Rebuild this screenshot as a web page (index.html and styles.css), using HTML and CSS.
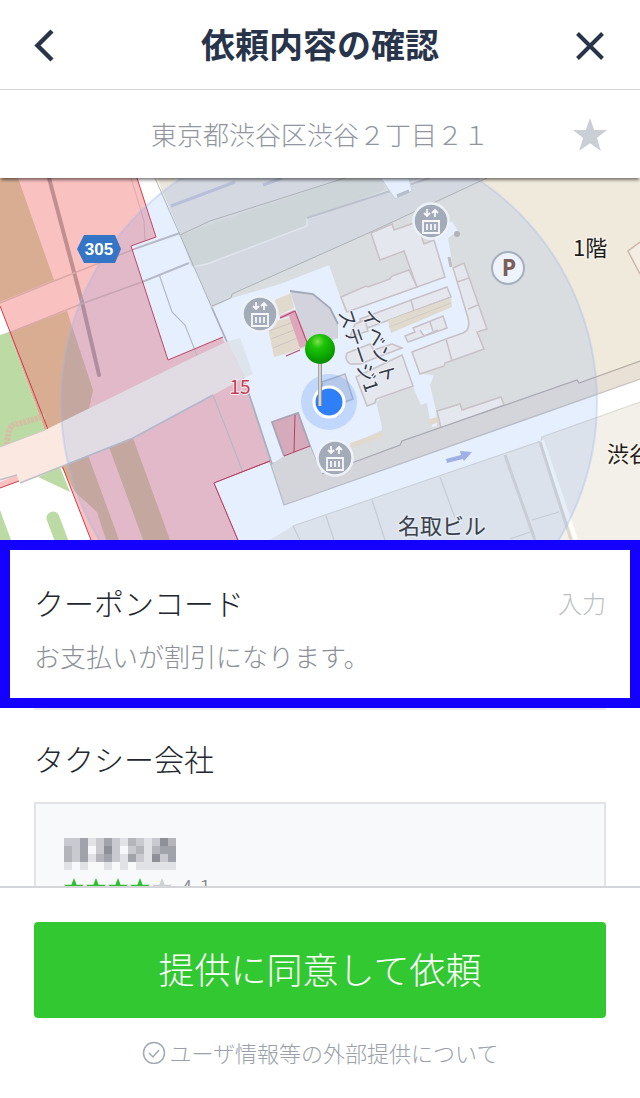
FILE: index.html
```html
<!DOCTYPE html>
<html lang="ja">
<head>
  <meta charset="UTF-8" />
  <meta name="viewport" content="width=device-width, initial-scale=1.0" />
  <title>依頼内容の確認</title>
  <link rel="stylesheet" href="styles.css">
</head>
<body>
  <header class="topbar">
    <button class="icon-button" type="button" aria-label="戻る">
      <svg width="40" height="40" viewBox="0 0 40 40"><path d="M22 7 L7.500 21.500 L22 36" fill="none" stroke="#28344a" stroke-width="4.400" /></svg>
    </button>
    <h1>依頼内容の確認</h1>
    <button class="icon-button" type="button" aria-label="閉じる">
      <svg width="40" height="40" viewBox="0 0 40 40"><path d="M7.500 9.500 L32.500 34.500 M32.500 9.500 L7.500 34.500" fill="none" stroke="#28344a" stroke-width="4" /></svg>
    </button>
  </header>

  <div class="address">
    <p>東京都渋谷区渋谷２丁目２１</p>
    <button class="icon-button" type="button" aria-label="お気に入り">
      <svg width="40" height="40" viewBox="0 0 40 40"><path d="M20 4 L24.200 16 H37 L26.900 24 L30.900 37 L20 29.300 L9.100 37 L13.100 24 L3 16 H15.800Z" fill="#caced5" /></svg>
    </button>
  </div>

  <main>
    <svg class="map" viewBox="0 178 640 362" role="img" aria-label="乗車地点の地図">
      <defs>
        <radialGradient id="pin" cx="42%" cy="25%" r="75%">
          <stop offset="0" stop-color="#7ee052" />
          <stop offset="0.300" stop-color="#1fc408" />
          <stop offset="0.600" stop-color="#0fb000" />
          <stop offset="1" stop-color="#078b00" />
        </radialGradient>
        <linearGradient id="needle">
          <stop offset="0" stop-color="#8b8b8b" />
          <stop offset="0.500" stop-color="#eeeeee" />
          <stop offset="1" stop-color="#777777" />
        </linearGradient>
        <g id="lift">
          <circle r="17.500" fill="#a4abb8" stroke="#edf1f8" stroke-width="2.500" />
          <g fill="none" stroke="#f6f8fb" stroke-width="1.800">
            <path d="M-8 0 H8 V12 H-8Z M-4 3 V9 M0 3 V9 M4 3 V9" />
            <path d="M-4 -12 V-5 M-7 -8 L-4 -5 L-1 -8 M4 -4 V-11 M1 -8 L4 -11 L7 -8" />
          </g>
        </g>
      </defs>

      <!-- land -->
      <rect y="178" width="640" height="362" fill="#f0eadc" />
      <path d="M0 178 H157 L211 306 L246 385 L280 540 H0Z" fill="#fff" />

      <!-- station side -->
      <path d="M0 178 H137 L156 237 L131 246 L168 360 L222 337 L246 385 L270 461 L214 483 L238 540 H91 L0 306Z" fill="#fac1c1" />
      <path d="M0 178 H18 L54 280 L0 302Z M9 332 L67 311 L93 390 L88 414 L45 431Z M60 464 L88 455 L119 540 H106 L97 512 L75 492Z M109 447 L133 438 L170 540 H143Z" fill="#d8ad92" />
      <path d="M0 335 L9 332 L45 431 L0 448Z M38 477 L60 467 L70 492Z M0 510 L11 540 H0Z" fill="#bcdaa3" />
      <path d="M53 518 L62 542" stroke="#bcdaa3" stroke-width="13" stroke-linecap="round" />
      <path d="M7 445 Q8 422 18 424 L45 416" fill="none" stroke="#d3c0a3" stroke-width="6" stroke-dasharray="3 1" />
      <path d="M0 482 L17 475 L19 481 L0 488Z" fill="#fac1c1" />
      <path d="M49 178 L82 302 L99 375" fill="none" stroke="#c28f91" stroke-width="4" stroke-linecap="round" />
      <path d="M0 303 L54 281 L137 248" fill="none" stroke="#dba9a9" stroke-width="1.500" />
      <path d="M9 333 L81 304 L142 282" fill="none" stroke="#dba9a9" stroke-width="1.500" />
      <path d="M131 178 L144 221 L145 240" fill="none" stroke="#dba9a9" stroke-width="1" />
      <path d="M137 248 L180 233 M142 282 L189 263" fill="none" stroke="#c8c3c0" stroke-width="2" />
      <path d="M159 274 L172 312 L185 325 L198 358 M213 395 L253 498 Q260 513 283 505" fill="none" stroke="#c6c1bd" stroke-width="1.200" />
      <path d="M137 178 L156 237 L131 246 L168 360 L223 337 M0 306 L91 540 M270 461 L214 483 L238 540 M0 488 L19 481" fill="none" stroke="#cf3b4b" stroke-width="1" />

      <!-- railway roof -->
      <path d="M157 178 H487 L373 231 L232 294 L231 298 L211 306Z" fill="#ebe5dc" />
      <path d="M180 235 L345 178 H383 L384 190 L307 219 V226 L207 264 L192 267Z" fill="#e4e1d3" />
      <path d="M192 267 L207 264 L307 226 V219 L424 178" fill="none" stroke="#f7f4ee" stroke-width="1.500" />
      <path d="M155 178 L212 308 M180 235 L210 221 L345 178 M212 306 L231 298 L232 294 L373 231 L487 178" fill="none" stroke="#bdb8af" stroke-width="1" />
      <path d="M307 218 L430 178" stroke="#cdc9c6" stroke-width="2" />
      <path d="M171 206 L235 182 M263 185 L282 178" stroke="#c9c8d6" stroke-width="3" />
      <path d="M381 178 H409 L412 191 L395 199Z" fill="#fff" stroke="#dcdad8" stroke-width="1" />
      <path d="M397 196 L409 191" stroke="#c8c5c4" stroke-width="3" />

      <!-- plaza and corridors -->
      <path d="M212 308 L232 298 L280 284 L329 265 L345 311 L362 340 L380 402 L382 430 L350 445 L320 475 L309 446 L299 413 L272 422 L284 455 L284 462 L272 464 L246 385Z" fill="#fff" />
      <path d="M345 311 L417 287 L445 277 L429 237 L452 221 L458 231 L448 238 L453 268 L470 320 Q472 330 463 333 L411 352 L420 374 L434 375 L430 385 L436 410 L437 426 L428 428 L413 386 L370 403Z" fill="#fff" />
      <path d="M212 308 L246 385 L272 464 L284 460" fill="none" stroke="#b9b5b3" stroke-width="1.800" />
      <path d="M290 291 L313 294 L330 308 L338 324 L338 338 L308 348Z" fill="#e9dfda" />
      <path d="M290 291 L313 294 L330 308 L338 324" fill="none" stroke="#b0acac" stroke-width="1.800" />
      <path d="M275 300 L291 293 L294 308 L276 317Z M267 323 L293 317 L305 348 L274 357Z M350 443 L382 432 L383 438 L352 448Z" fill="#fbe6c6" />
      <path d="M269 331 L296 321 M271 339 L299 328 M273 348 L302 336" stroke="#e2d0b8" stroke-width="1" />
      <path d="M280 316 L294 310 L308 345 L300 348 L289 316 L280 319Z" fill="#f7a9b0" />
      <path d="M280 318 L295 311 L308 345 M286 356 L300 350" fill="none" stroke="#c94458" stroke-width="1.200" />
      <path d="M272 422 L298 413 L310 446 L284 456Z" fill="#ecb0b3" />
      <path d="M284 456 L272 422 L298 413 L310 446 L320 472" fill="none" stroke="#b5a8ab" stroke-width="1.800" />
      <path d="M322 382 L345 374 L353 399 L345 402 L338 416 L325 408Z" fill="#eee9e4" stroke="#c5c1c0" stroke-width="1.500" />

      <!-- footbridge -->
      <path d="M0 447 L45 430 L190 359 L228 341 L246 377 L213 395 L133 438 L20 483 L17 475 L0 480Z" fill="#fae8e1" />
      <path d="M228 341 L240 338 L253 374 L246 377Z" fill="#f5f3ea" />
      <path d="M0 447 L45 430" fill="none" stroke="#d0c9c3" stroke-width="1" />
      <path d="M0 480 L17 475 M20 483 L133 438 L213 395" fill="none" stroke="#c2bfc6" stroke-width="1.800" />

      <!-- shops -->
      <path d="M376 401 L413 388 L421 405 L427 403 L430 421 L434 432 L356 460 L350 449 L384 436Z" fill="#f0eadc" />
      <g fill="#fef6ee" stroke="#dccabd" stroke-width="1.500">
        <path d="M371 233 L392 224 L394 230 L417 222 L424 244 L434 240 L445 277 L417 287 L404 251 L380 260Z" />
        <path d="M341 297 L366 286 L368 287 L390 279 L392 276 L409 270 L417 287 L347 312Z" />
        <path d="M360 319 L411 300 L447 287 L451 297 L389 320 L362 330Z M411 300 L414 311" />
        <path d="M453 268 L464 263 L487 329 L477 332 L484 349 L445 363 L444 366 L420 374 L412 352 L446 339 L463 333 Q471 330 468 318Z M457 282 L469 278 M468 309 L478 305 M446 339 L452 361" />
        <path d="M413 328 L443 316 L447 328 L408 342 L405 336 L415 332Z M430 322 L433 331 M420 330 L424 336 L438 330" />
        <path d="M355 324 L365 320 L368 331 L350 337Z" />
        <path d="M374 350 L392 344 L402 348 L360 364 L350 364 Q344 359 347 353 L370 344Z" />
        <path d="M356 377 L402 355 L413 386 L376 399 L375 403 L367 406Z" />
        <path d="M437 411 L460 404 L462 410 L501 397 L504 405 L441 428Z" />
      </g>
      <path d="M388 320 L451 298 L452 307 L391 333Z" fill="#f9e7c8" />
      <path d="M389 327 L451 303" stroke="#e8d7bd" stroke-width="1" />
      <path d="M429 419 L438 417 L439 422 L431 425Z" fill="#fbe6c6" />
      <path d="M449 257 L451 267" stroke="#d5c2b8" stroke-width="3" />
      <circle cx="457" cy="234" r="3" fill="#c4bab3" />

      <!-- streets -->
      <path d="M272 464 L284 456 L310 446 L322 474 L400 445 L402 441 L577 380 L579 383 L640 361 V379 L284 505Z" fill="#e9e1d6" />
      <path d="M322 474 L400 445 L402 441 L577 380 L579 383 L640 361" fill="none" stroke="#b5aca6" stroke-width="1.200" />
      <path d="M284 505 L640 379 V402 L542 437 L541 441 L503 454 L293 526 L277 540 H238 L214 483 L270 462Z" fill="#fff" />
      <path d="M270 462 L284 505 L640 379" fill="none" stroke="#cbc3bf" stroke-width="1.300" />
      <path d="M295 415 L294 452 M284 456 L310 446 M214 483 L270 461 M214 483 L238 540" stroke="#c73449" stroke-width="1" />
      <path d="M270 540 L293 526 L503 454 L541 441 L542 437 L640 402 V540Z" fill="#f3f0e9" />
      <path d="M293 526 L503 454 L541 441 L542 437 L640 402" fill="none" stroke="#e0dcd5" stroke-width="1.200" />
      <path d="M542 440 L576 540" stroke="#fffef8" stroke-width="4" />
      <path d="M505 455 L535 540 M540 442 L571 540" fill="none" stroke="#dcd8d1" stroke-width="3" />
      <path d="M440 477 L455 518 M293 526 L300 540 M326 516 L334 540 M372 500 L385 540 M532 520 L559 512 M510 539 L533 531" fill="none" stroke="#dad6cf" stroke-width="1.200" />
      <path d="M640 242 L628 251 L640 274" fill="#f4ede4" stroke="#cbb7a9" stroke-width="1.500" />

      <circle cx="329" cy="402" r="268" fill="#4d8ffa" fill-opacity="0.140" stroke="#9fb6ed" stroke-opacity="0.350" stroke-width="2" />

      <path d="M446 459 L461 455 L460 451 L472 452 L464 461 L463 459 L447 463Z" fill="#9eb0e4" />

      <path d="M77 249 L84 235 H115 L121 249 L115 263 H84Z" fill="#3575c5" />
      <text class="map-route" x="99" y="255">305</text>
      <text class="map-exit" x="240" y="394">15</text>
      <text class="map-label" x="573" y="256">1階</text>
      <text class="map-label" x="607" y="462">渋谷</text>
      <text class="map-label map-building" x="398" y="534">名取ビル</text>
      <text class="map-event" transform="translate(362 311) rotate(74)">イベント</text>
      <text class="map-event" transform="translate(338 312) rotate(71)">ステージ1</text>

      <use href="#lift" x="431" y="221" />
      <use href="#lift" x="260" y="314" />
      <use href="#lift" x="335" y="458" />
      <circle cx="508" cy="268" r="16" fill="#eef3fb" stroke="#a6afbd" stroke-width="2" />
      <text class="map-parking" x="509" y="276">P</text>

      <!-- current position and pin -->
      <circle cx="329" cy="402" r="28" fill="#4b8ef5" fill-opacity="0.240" />
      <circle cx="329" cy="402" r="15" fill="#2f80f8" stroke="#fff" stroke-width="3" />
      <rect x="318" y="360" width="4" height="46" fill="url(#needle)" />
      <circle cx="320" cy="349" r="15" fill="url(#pin)" />
    </svg>

    <section class="coupon">
      <div class="coupon-row">
        <label for="coupon">クーポンコード</label>
        <input id="coupon" type="text" placeholder="入力">
      </div>
      <p>お支払いが割引になります。</p>
    </section>

    <section class="company">
      <h2>タクシー会社</h2>
      <div class="card">
        <!-- company name is masked -->
        <svg class="masked" width="112" height="32" viewBox="0 0 14 4" shape-rendering="crispEdges">
          <path d="M0 0h14v3h-14z" fill="#c8cacf" />
          <path d="M0 1h1v2h-1z M3 0h1v1h-1z M4 2h1v1h-1z M13 0h1v1h-1z M8 0h1v1h-1z M9 1h1v1h-1z M11 1h1v1h-1z" fill="#b3b5bb" />
          <path d="M2 0h1v1h-1z M2 1h1v2h-1z M5 0h1v3h-1z M8 2h1v1h-1z M11 2h1v1h-1z M12 0h1v2h-1z M13 1h1v2h-1z" fill="#a0a3aa" />
          <path d="M12 0h1v1h-1z M11 2h1v1h-1z M5 1h1v1h-1z" fill="#8d9097" />
          <path d="M3 1h1v1h-1z M7 1h1v1h-1z" fill="#f7f8fa" />
          <path d="M3 0h1v1h-1z M3 2h1v1h-1z M7 2h1v1h-1z M10 0h1v3h-1z M7 0h1v1h-1z M0 3h1v1h-1z M2 3h1v1h-1z M5 3h1v1h-1z M7 3h1v1h-1z M9 3h2v1h-2z M11 3h3v1h-3z" fill="#e0e2e5" />
        </svg>
        <div class="rating">
          <svg width="110" height="20" viewBox="0 0 110 20">
            <defs><path id="star" d="M10 0 L12.600 6.800 H20 L14 11.500 L16.200 19 L10 14.500 L3.800 19 L6 11.500 L0 6.800 H7.400Z" /></defs>
            <g fill="#32be32">
              <use href="#star" />
              <use href="#star" x="22" />
              <use href="#star" x="44" />
              <use href="#star" x="66" />
            </g>
            <use href="#star" x="88" fill="#cdd0d4" />
          </svg>
          <span>4.1</span>
        </div>
      </div>
    </section>
  </main>

  <footer>
    <button class="submit" type="button">提供に同意して依頼</button>
    <a class="privacy" href="#privacy">
      <svg width="24" height="24" viewBox="0 0 24 24" fill="none" stroke="#a3a8b1" stroke-width="1.500"><circle cx="12" cy="13" r="10.500" /><path d="M7 13 L11 17 L17 10" /></svg>
      ユーザ情報等の外部提供について
    </a>
  </footer>
</body>
</html>
```

FILE: styles.css
```css
* {
  box-sizing: border-box;
}

body {
  display: flex;
  flex-direction: column;
  height: 100vh;
  margin: 0;
  background: #fff;
  color: #22262e;
  font-family: "Noto Sans CJK JP", sans-serif;
  font-weight: 300;
}

h1, h2, p {
  margin: 0;
  font-weight: inherit;
}

button, input {
  padding: 0;
  border: 0;
  background: none;
  font: inherit;
}

.icon-button {
  width: 40px;
  height: 40px;
  cursor: pointer;
}

.icon-button svg {
  display: block;
}

.topbar {
  display: flex;
  align-items: center;
  justify-content: space-between;
  padding: 24px 30px 25px;
  border-bottom: 1px solid #d5d5d7;
}

.topbar h1 {
  color: #28344a;
  font-size: 34px;
  font-weight: 700;
  line-height: 40px;
}

.address {
  position: relative;
  z-index: 1;
  display: grid;
  grid-template-columns: 40px 1fr 40px;
  align-items: center;
  padding: 24px 30px;
  background: #fff;
  box-shadow: 0 3px 3px -1px rgba(0, 0, 0, 0.5);
}

.address p {
  grid-column: 2;
  color: #90959e;
  font-size: 26px;
  line-height: 40px;
  text-align: center;
  white-space: nowrap;
}

main {
  flex: 1;
  min-height: 0;
  overflow: hidden;
}

.map {
  display: block;
  width: 100%;
  height: auto;
}

.map-route {
  fill: #fff;
  font: 700 17px "Liberation Sans", sans-serif;
  text-anchor: middle;
}

.map-exit {
  fill: #c93b50;
  stroke: #f5eef5;
  stroke-width: 2px;
  paint-order: stroke;
  font: 400 19px "Noto Sans CJK JP", sans-serif;
  text-anchor: middle;
}

.map-label {
  fill: #1c1c1c;
  stroke: #f7f3e9;
  stroke-width: 3px;
  paint-order: stroke;
  font-size: 22px;
  font-weight: 400;
}

.map-building {
  fill: #3c414b;
  stroke: #e3eaf2;
}

.map-event {
  fill: #343a47;
  stroke: #eef2f9;
  stroke-width: 2px;
  paint-order: stroke;
  font-size: 19px;
  font-weight: 400;
}

.map-parking {
  fill: #7b5e57;
  font: 700 23px "Open Sans", sans-serif;
  text-anchor: middle;
}

.coupon {
  padding: 32px 24px 22px;
  border: 10px solid #1400ff;
}

.coupon-row {
  display: flex;
  align-items: center;
  justify-content: space-between;
}

.coupon label {
  font-size: 30px;
  line-height: 40px;
}

.coupon input {
  flex: 1;
  min-width: 0;
  height: 36px;
  font-size: 24px;
  text-align: right;
}

.coupon input::placeholder {
  color: #bcbec2;
  opacity: 1;
}

.coupon p {
  margin-top: 14px;
  color: #8b8f96;
  font-size: 26px;
  line-height: 40px;
}

.company {
  margin: 0 34px;
  border-top: 2px solid #ececee;
}

.company h2 {
  padding: 28px 0 24px;
  font-size: 30px;
  line-height: 40px;
}

.card {
  padding: 34px 28px;
  border: 2px solid #e1e3e6;
  background: #f8f9fb;
}

.masked {
  display: block;
}

.rating {
  display: flex;
  align-items: center;
  gap: 6px;
  color: #85888e;
  font-size: 24px;
  line-height: 36px;
}

footer {
  display: flex;
  flex-direction: column;
  padding: 34px 34px 28px;
  border-top: 2px solid #d3d5d8;
  background: #fff;
}

.submit {
  padding: 22px 0 26px;
  border-radius: 4px;
  background: #32c832;
  color: #fff;
  font-size: 36px;
  line-height: 48px;
  cursor: pointer;
}

.privacy {
  display: flex;
  align-items: center;
  justify-content: center;
  gap: 4px;
  margin-top: 18px;
  padding-bottom: 2px;
  color: #9a9fa9;
  font-size: 22px;
  line-height: 32px;
  text-decoration: none;
}
```
